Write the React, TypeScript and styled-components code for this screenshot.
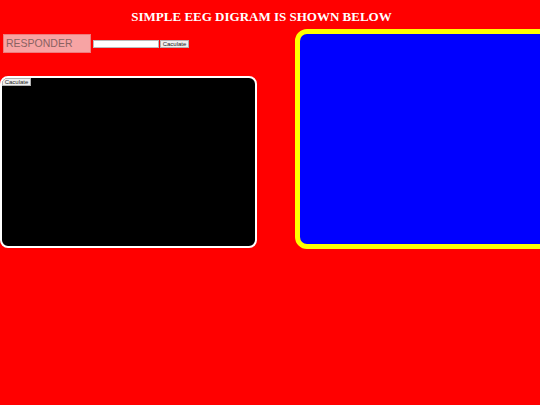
import React from "react";
import styled, { createGlobalStyle } from "styled-components";

const Global = createGlobalStyle`
  html, body { margin: 0; padding: 0; background: #ff0000; overflow: hidden; }
  #root { width: 540px; height: 405px; }
`;

const Page = styled.div`
  width: 540px;
  height: 405px;
  background: #ff0000;
  overflow: hidden;
  padding-top: 9px;
  box-sizing: border-box;
`;

const Title = styled.h1`
  margin: 0;
  padding-right: 17px;
  font-family: "Liberation Serif", "Times New Roman", serif;
  font-weight: bold;
  font-size: 13px;
  line-height: 15px;
  color: #ffffff;
  text-align: center;
`;

const Main = styled.div`
  display: flex;
  align-items: flex-start;
  padding-top: 5px;
`;

const LeftColumn = styled.div`
  width: 257px;
  flex: none;
  display: flex;
  flex-direction: column;
  padding-top: 5px;
`;

const Controls = styled.div`
  display: flex;
  align-items: center;
  padding-left: 3px;
  height: 19px;
`;

const Responder = styled.div`
  width: 88px;
  height: 19px;
  box-sizing: border-box;
  background: #f7a4a4;
  border: 1px solid #ee7c7c;
  color: #8a6262;
  font-family: "Liberation Sans", Arial, sans-serif;
  font-size: 10.5px;
  line-height: 17px;
  padding-left: 2px;
`;

const TextInput = styled.input`
  margin: 0 0 0 2px;
  width: 66px;
  height: 8px;
  box-sizing: border-box;
  border: 1px solid #bbbbbb;
  background: #ffffff;
  padding: 0;
`;

const SmallButton = styled.button<{ $gap?: number }>`
  margin: 0 0 0 ${(p) => p.$gap ?? 0}px;
  height: 8px;
  width: 29px;
  box-sizing: border-box;
  padding: 0;
  border: 1px solid #b0b0b0;
  background: #efefef;
  color: #222;
  font-family: "Liberation Sans", Arial, sans-serif;
  font-size: 6px;
  line-height: 6px;
  text-align: center;
  display: block;
`;

const BlackPanel = styled.div`
  margin-top: 23px;
  width: 257px;
  height: 172px;
  box-sizing: border-box;
  background: #000000;
  border: 2px solid #ffffff;
  border-radius: 8px;
  overflow: hidden;
`;

const BluePanel = styled.div`
  margin-left: 38px;
  flex: none;
  width: 320px;
  height: 220px;
  box-sizing: border-box;
  background: #0000ff;
  border: 5px solid #ffff00;
  border-radius: 12px;
`;

export default function App() {
  return (
    <>
      <Global />
      <Page>
        <Title>SIMPLE EEG DIGRAM IS SHOWN BELOW</Title>
        <Main>
          <LeftColumn>
            <Controls>
              <Responder>RESPONDER</Responder>
              <TextInput type="text" />
              <SmallButton $gap={1}>Caculate</SmallButton>
            </Controls>
            <BlackPanel>
              <SmallButton>Caculate</SmallButton>
            </BlackPanel>
          </LeftColumn>
          <BluePanel />
        </Main>
      </Page>
    </>
  );
}
